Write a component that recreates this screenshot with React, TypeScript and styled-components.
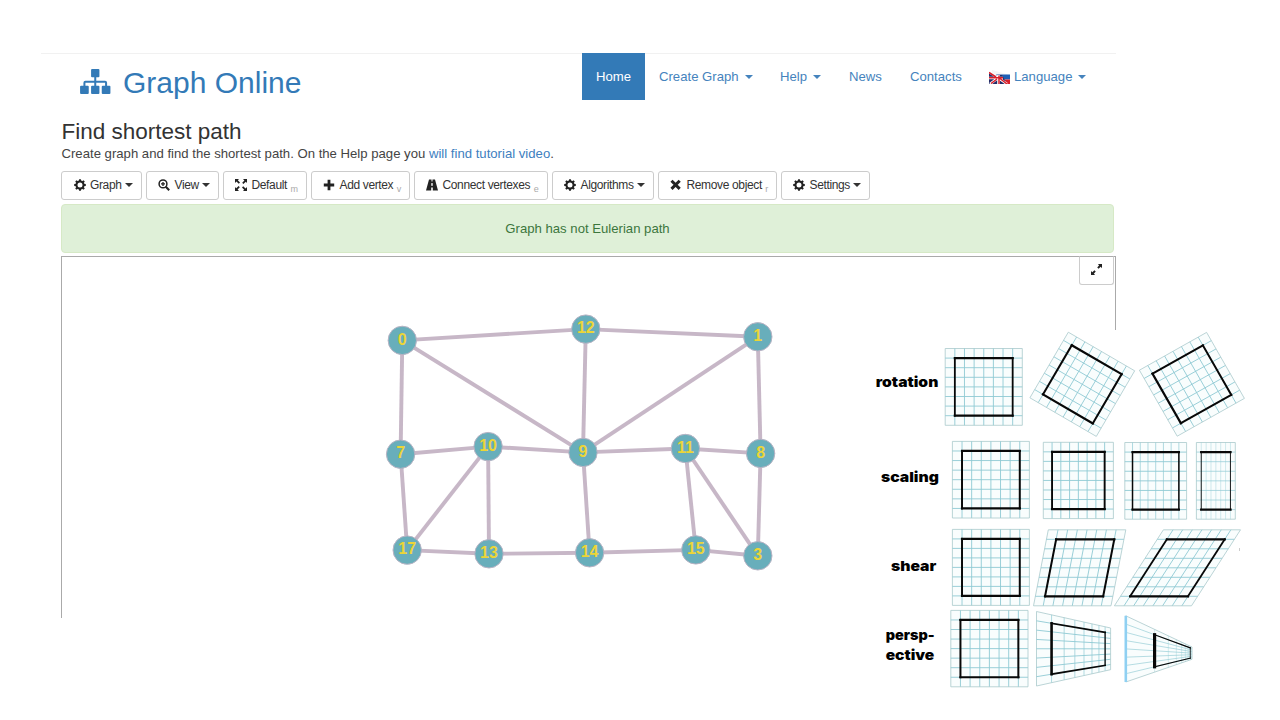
import React from 'react';
import styled, { createGlobalStyle } from 'styled-components';

const GlobalStyle = createGlobalStyle`
  * { box-sizing: border-box; }
  html, body { margin: 0; padding: 0; background: #fff; }
  body {
    font-family: "Liberation Sans", Arial, sans-serif;
    font-size: 13.15px;
    color: #333;
    overflow: hidden;
  }
`;

const Page = styled.div`
  position: relative;
  width: 1280px;
  height: 720px;
  padding: 53px 0 0 41px;
  overflow: hidden;
`;

const Site = styled.div`
  width: 1075px;
`;

const Header = styled.header`
  display: flex;
  justify-content: space-between;
  height: 66px;
  padding: 0 18px 0 39px;
  box-shadow: inset 0 1px 0 #f1f1f1;
`;

const Brand = styled.a`
  display: flex;
  gap: 12.5px;
  padding-top: 12px;
  color: #337ab7;
  font-size: 30px;
  line-height: 35px;
  svg { margin-top: 4px; }
`;

const Nav = styled.nav`
  display: flex;
  height: 47px;
`;

const NavItem = styled.a<{ $w: number; $active?: boolean }>`
  display: flex;
  align-items: center;
  width: ${(p) => p.$w}px;
  padding-left: 14px;
  white-space: nowrap;
  background: ${(p) => (p.$active ? '#337ab7' : 'transparent')};
  color: ${(p) => (p.$active ? '#fff' : '#4583bd')};
`;

const Caret = styled.span<{ $gap?: number }>`
  width: 0;
  height: 0;
  margin-left: ${(p) => p.$gap ?? 6}px;
  border-top: 4px solid currentColor;
  border-left: 4px solid transparent;
  border-right: 4px solid transparent;
`;

const FlagIcon = styled.svg`
  margin-right: 4px;
`;

const Main = styled.main`
  padding-left: 20px;
`;

const Title = styled.h1`
  margin: 0;
  padding-left: 0.5px;
  font-size: 22.5px;
  font-weight: 400;
  line-height: 26px;
`;

const Intro = styled.p`
  margin: 0;
  padding-left: 0.5px;
  line-height: 18px;
  color: #444;
  a { color: #4080c0; }
`;

const Toolbar = styled.div`
  display: flex;
  gap: 4px;
  margin-top: 8px;
`;

const ToolButton = styled.button<{ $w: number }>`
  display: flex;
  align-items: center;
  width: ${(p) => p.$w}px;
  height: 29px;
  padding: 0 0 1px 11.5px;
  border: 1px solid #ccc;
  border-radius: 3px;
  background: #fff;
  color: #333;
  font: 12px "Liberation Sans", Arial, sans-serif;
  letter-spacing: -0.36px;
  white-space: nowrap;
  svg { flex: none; margin-right: 4.5px; }
`;

const Shortcut = styled.sub`
  margin: 9px 0 0 3.5px;
  color: #aaa;
  font-size: 9px;
  line-height: 9px;
`;

const Message = styled.div`
  display: flex;
  align-items: center;
  justify-content: center;
  width: 1053px;
  height: 49px;
  margin-top: 4px;
  padding-bottom: 1px;
  border: 1px solid #d6e9c6;
  border-radius: 4px;
  background: #dff0d8;
  color: #3c763d;
`;

const Canvas = styled.section`
  position: relative;
  width: 1055px;
  height: 362px;
  margin-top: 3px;
  border: 1px solid #aaa;
  border-bottom: 0;
`;

const FullscreenButton = styled.button`
  position: absolute;
  top: -1px;
  right: 1px;
  display: flex;
  align-items: center;
  justify-content: center;
  width: 35px;
  height: 29px;
  padding: 0 0 2px;
  border: 1px solid #ccc;
  border-top-color: #aaa;
  border-radius: 0 0 3px 3px;
  background: #fff;
`;

const GraphDrawing = styled.svg`
  display: block;
  font: bold 16px "Liberation Sans", Arial, sans-serif;
`;

const TransformFigure = styled.aside`
  position: absolute;
  left: 870px;
  top: 330px;
  width: 380px;
  height: 364px;
  background: #fff;
  svg { display: block; }
  text { font: 900 13.8px Inter, "Open Sans", sans-serif; fill: #000; }
`;

type IconName = 'cog' | 'zoom' | 'fullscreen' | 'plus' | 'road' | 'remove';

const Icon = ({ name }: { name: IconName }) => (
  <svg width="12" height="12" viewBox="0 0 12 12" fill="#222" stroke="#222" strokeWidth="0">
    {name === 'cog' && (
      <>
        <circle cx="6" cy="6" r="3.5" fill="none" strokeWidth="2" />
        {[0, 45, 90, 135, 180, 225, 270, 315].map((a) => (
          <path key={a} d="M4.7 2.2 5.1.2h1.8l.4 2z" transform={`rotate(${a} 6 6)`} />
        ))}
      </>
    )}
    {name === 'zoom' && (
      <>
        <circle cx="5" cy="4.9" r="3.9" fill="none" strokeWidth="1.5" />
        <path d="M3 4.9h4M5 2.9v4" strokeWidth="1.3" />
        <path d="m7.8 7.8 3.4 3.4" strokeWidth="2.1" />
      </>
    )}
    {name === 'fullscreen' &&
      [0, 90, 180, 270].map((a) => (
        <path key={a} d="M0 0h4L2.8 1.2 5 3.6 3.8 4.8 1.4 2.6 0 4z" transform={`rotate(${a} 6 6)`} />
      ))}
    {name === 'plus' && <path d="M6 .8v10.4M.8 6h10.4" strokeWidth="2.8" />}
    {name === 'road' && (
      <path
        fillRule="evenodd"
        d="M3 .5h2.5v2h1v-2H9l3 11H6.8V8.4H5.2v3.1H0zM5.4 4l-.2 2.7h1.6L6.6 4z"
      />
    )}
    {name === 'remove' && <path d="m1.5 1.7 8.2 8.2M9.7 1.7 1.5 9.9" strokeWidth="3" />}
  </svg>
);

const SitemapIcon = () => (
  <svg width="30.5" height="25" viewBox="0 0 91 75" fill="#337ab7">
    <rect x="33" y="0" width="25" height="25" rx="3" />
    <rect x="0" y="50" width="26" height="25" rx="3" />
    <rect x="33" y="50" width="25" height="25" rx="3" />
    <rect x="65" y="50" width="26" height="25" rx="3" />
    <path d="M45.5 20V55M13 55V41q0-3 3-3H75q3 0 3 3V55" fill="none" stroke="#337ab7" strokeWidth="6" />
  </svg>
);

const Flag = () => (
  <FlagIcon width="21" height="14" viewBox="0 0 21 14">
    <path d="M3 0 21 5H3z" fill="#f5f5f5" />
    <path d="M7 4.5h14V9.5H12z" fill="#1f5fb5" />
    <path d="M12 9.5h9V14h-9z" fill="#d8202a" />
    <path d="M0 2 5 5H13L18 14H0z" fill="#252c68" />
    <path d="M0 8h14M0 2l8 5M8 7l10 7M9.500 14V5M1 14l8-6" fill="none" stroke="#fff" strokeWidth="2.6" />
    <path d="M0 7.800h14M10 14V5.500M0 2.500l7 4.500M11 8.500l7 5.500M2 13.500l6-4.500" fill="none" stroke="#d8202a" strokeWidth="1.5" />
  </FlagIcon>
);

const vertices: Record<string, [number, number]> = {
  '0': [402.3, 340.4],
  '12': [585.8, 329.1],
  '1': [757.8, 336.8],
  '7': [400.6, 454.2],
  '10': [488.1, 446.6],
  '9': [583, 452.4],
  '11': [685.4, 448.5],
  '8': [760.6, 453.4],
  '17': [407.2, 550.1],
  '13': [489, 553.8],
  '14': [589.6, 552.8],
  '15': [695.8, 549.9],
  '3': [757.8, 555.8],
};

const edges = [
  '0-12', '12-1', '0-7', '0-9', '12-9', '1-9', '1-8', '7-10', '10-9', '9-11', '11-8', '7-17',
  '10-17', '10-13', '9-14', '11-15', '11-3', '8-3', '17-13', '13-14', '14-15', '15-3',
].map((e) => e.split('-'));

const Graph = () => (
  <GraphDrawing width="1053" height="361" viewBox="62 257 1053 361">
    {edges.map(([a, b]) => (
      <line
        key={`${a}-${b}`}
        x1={vertices[a][0]}
        y1={vertices[a][1]}
        x2={vertices[b][0]}
        y2={vertices[b][1]}
        stroke="#c7b7c7"
        strokeWidth="3.9"
      />
    ))}
    {Object.entries(vertices).map(([id, [x, y]]) => (
      <g key={id}>
        <circle cx={x} cy={y} r="14.2" fill="#68aebb" stroke="#b8b3c4" strokeWidth="1" />
        <text x={x} y={y + 4.2} textAnchor="middle" fill="#ecd537">
          {id}
        </text>
      </g>
    ))}
  </GraphDrawing>
);

type Point = [number, number];
type Quad = [Point, Point, Point, Point];

const box = (l: number, t: number, r: number, b: number): Quad => [[l, t], [r, t], [r, b], [l, b]];

/* Maps a unit-square position into a quad whose left and right sides are parallel. */
const project = ([tl, tr, br, bl]: Quad, u: number, v: number): Point => {
  const near = 1 / Math.hypot(tl[0] - bl[0], tl[1] - bl[1]);
  const far = 1 / Math.hypot(tr[0] - br[0], tr[1] - br[1]);
  const t = (u * far) / ((1 - u) * near + u * far);
  const at = (i: 0 | 1) =>
    (1 - t) * ((1 - v) * tl[i] + v * bl[i]) + t * ((1 - v) * tr[i] + v * br[i]);
  return [at(0), at(1)];
};

interface GridProps {
  quad: Quad;
  side?: [number, number];
  cap?: number;
  line?: number;
}

const Grid = ({ quad, side = [2.2, 2.2], cap = 2.2, line = 0.9 }: GridProps) => {
  const p = (u: number, v: number) => project(quad, u / 8, v / 8).map((n) => n.toFixed(2)).join(' ');
  return (
    <g fill="none">
      <path d={`M${p(0, 0)}L${p(8, 0)}L${p(8, 8)}L${p(0, 8)}Z`} fill="#f9fdfd" />
      {[0, 1, 2, 3, 4, 5, 6, 7, 8].map((i) => {
        const outer = i === 0 || i === 8;
        return (
          <g key={i} stroke={outer ? '#a9c9cb' : '#8fcad4'}>
            <path d={`M${p(i, 0)}L${p(i, 8)}`} strokeWidth={outer ? 0.8 : line} />
            <path d={`M${p(0, i)}L${p(8, i)}`} strokeWidth={outer ? 0.8 : Math.min(0.9, line + 0.3)} />
          </g>
        );
      })}
      <g stroke="#080808" strokeLinecap="square">
        <path d={`M${p(1, 1)}L${p(7, 1)}M${p(1, 7)}L${p(7, 7)}`} strokeWidth={cap} />
        <path d={`M${p(1, 1)}L${p(1, 7)}`} strokeWidth={side[0]} />
        <path d={`M${p(7, 1)}L${p(7, 7)}`} strokeWidth={side[1]} />
      </g>
    </g>
  );
};

const grids: GridProps[] = [
  { quad: box(945.2, 348.5, 1022.3, 425.3), side: [1.8, 1.8] },
  { quad: [[1068.3, 332.2], [1134.7, 370.8], [1096.3, 436.4], [1029.9, 397.8]], side: [2, 2] },
  { quad: [[1139.4, 370.2], [1206.6, 332.4], [1244.4, 398.4], [1177.2, 436.2]], side: [2.3, 2], cap: 2 },
  { quad: box(952.4, 441.4, 1029.4, 518), side: [2, 2] },
  { quad: box(1043.3, 442.3, 1113.4, 518.6), side: [1.9, 1.9] },
  { quad: box(1124.8, 442.5, 1186.6, 519.2), side: [1.5, 1.5], line: 0.7 },
  { quad: box(1196.4, 442.5, 1235.3, 519.2), side: [0.9, 0.9], cap: 2.4, line: 0.4 },
  { quad: box(952.4, 529.4, 1029.4, 605.4), side: [2, 2] },
  { quad: [[1048.3, 529.8], [1125.8, 529.8], [1111, 605.8], [1033.5, 605.8]], side: [2, 2] },
  { quad: [[1163.4, 529.8], [1240.5, 529.8], [1191.5, 605.8], [1114.4, 605.8]], side: [1.8, 1.8] },
  { quad: box(950.8, 610.4, 1028, 686.8), side: [2, 2] },
  { quad: [[1036.5, 611.5], [1110.6, 628], [1110.6, 669.7], [1036.5, 686]], side: [2.6, 1.3], cap: 1.7, line: 0.7 },
  { quad: [[1125.8, 615.8], [1192, 647], [1192, 659.3], [1125.8, 682]], side: [3.2, 0.8], cap: 1.2, line: 0.35 },
];

const labels = [
  { text: 'rotation', x: 875.8, y: 387, width: 62.5 },
  { text: 'scaling', x: 881, y: 481.5, width: 57.8 },
  { text: 'shear', x: 891, y: 571, width: 45.3 },
  { text: 'persp-', x: 885.7, y: 640, width: 49 },
  { text: 'ective', x: 885.7, y: 660, width: 48.6 },
];

const Transforms = () => (
  <TransformFigure>
    <svg width="380" height="364" viewBox="870 330 380 364">
      {grids.map((g, i) => (
        <Grid key={i} {...g} />
      ))}
      <path d="M1125.8 615.8V682" stroke="#8fd0f2" strokeWidth="2.6" />
      <path d="M1239.5 548v3" stroke="#ccc" />
      {labels.map((l) => (
        <text key={l.text} x={l.x} y={l.y} textLength={l.width} lengthAdjust="spacingAndGlyphs">
          {l.text}
        </text>
      ))}
    </svg>
  </TransformFigure>
);

interface Tool {
  icon: IconName;
  label: string;
  width: number;
  shortcut?: string;
}

const tools: Tool[] = [
  { icon: 'cog', label: 'Graph', width: 80.5 },
  { icon: 'zoom', label: 'View', width: 73 },
  { icon: 'fullscreen', label: 'Default', width: 84, shortcut: 'm' },
  { icon: 'plus', label: 'Add vertex', width: 99, shortcut: 'v' },
  { icon: 'road', label: 'Connect vertexes', width: 134, shortcut: 'e' },
  { icon: 'cog', label: 'Algorithms', width: 102 },
  { icon: 'remove', label: 'Remove object', width: 119, shortcut: 'r' },
  { icon: 'cog', label: 'Settings', width: 89 },
];

export default function App() {
  return (
    <Page>
      <GlobalStyle />
      <Site>
        <Header>
          <Brand>
            <SitemapIcon />
            Graph Online
          </Brand>
          <Nav>
            <NavItem $w={63} $active>Home</NavItem>
            <NavItem $w={121}>Create Graph<Caret /></NavItem>
            <NavItem $w={69}>Help<Caret /></NavItem>
            <NavItem $w={61}>News</NavItem>
            <NavItem $w={79}>Contacts</NavItem>
            <NavItem $w={123}><Flag />Language<Caret /></NavItem>
          </Nav>
        </Header>
        <Main>
          <Title>Find shortest path</Title>
          <Intro>
            Create graph and find the shortest path. On the Help page you <a>will find tutorial video</a>.
          </Intro>
          <Toolbar>
            {tools.map((t) => (
              <ToolButton key={t.label} $w={t.width}>
                <Icon name={t.icon} />
                {t.label}
                {t.shortcut ? <Shortcut>{t.shortcut}</Shortcut> : <Caret $gap={3} />}
              </ToolButton>
            ))}
          </Toolbar>
          <Message>Graph has not Eulerian path</Message>
          <Canvas>
            <Graph />
            <FullscreenButton>
              <svg width="11" height="11" viewBox="0 0 12 12" fill="#222">
                <path d="M7.5 0H12v4.5l-1.4-1.4L8.3 5.2 6.8 3.7 8.9 1.4zM4.5 12H0V7.5l1.4 1.4 2.3-2.1L5.2 8.3 3.1 10.6z" />
              </svg>
            </FullscreenButton>
          </Canvas>
        </Main>
      </Site>
      <Transforms />
    </Page>
  );
}
